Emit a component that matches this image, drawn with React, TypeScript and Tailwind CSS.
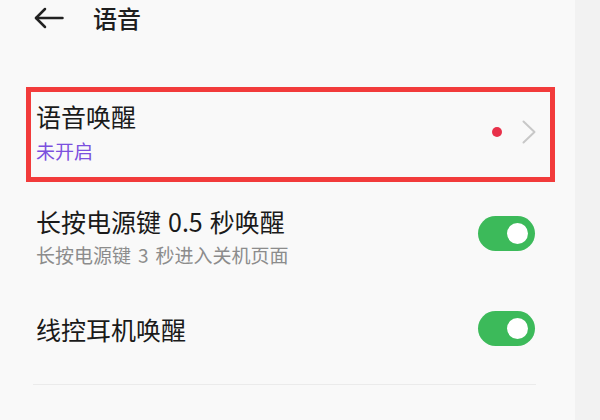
const font = { fontFamily: '"Noto Sans CJK SC", "Noto Sans", sans-serif' }

function Toggle() {
  return (
    <div className="flex h-[35px] w-[57px] shrink-0 items-center justify-end rounded-full bg-[#3cba5a] pr-[7px]">
      <div className="h-[21px] w-[21px] rounded-full bg-white" />
    </div>
  )
}

export default function App() {
  return (
    <div className="flex h-[420px] w-[600px] overflow-hidden bg-[#f2f2f2]" style={font}>
      <div className="flex w-[575px] flex-col bg-[#f9f9f9]">
        {/* Header */}
        <div className="flex h-[36px] items-center pl-[34px]">
          <svg width="30" height="22" viewBox="0 0 30 22" fill="none">
            <path d="M28.5 11H2" stroke="#222" strokeWidth="2.5" strokeLinecap="round" />
            <path d="M11 2L2 11L11 20" stroke="#222" strokeWidth="2.5" strokeLinecap="round" strokeLinejoin="round" />
          </svg>
          <span className="ml-[29px] text-[24px] leading-[32px] font-medium text-[#1e1e1e]">语音</span>
        </div>

        {/* Voice wake-up, highlighted */}
        <div className="ml-[26px] mr-[20px] mt-[51px] flex h-[95px] items-center border-[5px] border-[#f23b3b] pb-[6px] pl-[5px] pr-[14px]">
          <div className="flex flex-1 flex-col">
            <span className="text-[25px] leading-[32px] text-[#1a1a1a]">语音唤醒</span>
            <span className="mt-[7px] text-[19px] leading-[24px] text-[#7b50de]">未开启</span>
          </div>
          <div className="h-[10px] w-[10px] rounded-full bg-[#e8314a]" />
          <svg className="ml-[20px]" width="14" height="24" viewBox="0 0 14 24" fill="none">
            <path d="M1.5 1.5L12.5 12L1.5 22.5" stroke="#c8c8c8" strokeWidth="2" strokeLinecap="round" strokeLinejoin="round" />
          </svg>
        </div>

        {/* Power key wake-up */}
        <div className="ml-[36px] mr-[40px] mt-[23px] flex items-center">
          <div className="flex flex-1 flex-col">
            <span className="text-[25px] leading-[32px] text-[#1a1a1a]">
              长按电源键<span className="mx-[7px]">0.5</span>秒唤醒
            </span>
            <span className="mt-[6px] text-[19px] leading-[24px] text-[#8c8c8c]">
              长按电源键<span className="mx-[7px]">3</span>秒进入关机页面
            </span>
          </div>
          <div className="-mt-[5px]">
            <Toggle />
          </div>
        </div>

        {/* Wired headset wake-up */}
        <div className="ml-[36px] mr-[40px] mt-[44px] flex items-center">
          <span className="flex-1 text-[25px] leading-[32px] text-[#1a1a1a]">线控耳机唤醒</span>
          <Toggle />
        </div>

        <div className="ml-[33px] mr-[39px] mt-[38px] h-px bg-[#ebebeb]" />
      </div>
      <div className="flex-1" />
    </div>
  )
}
